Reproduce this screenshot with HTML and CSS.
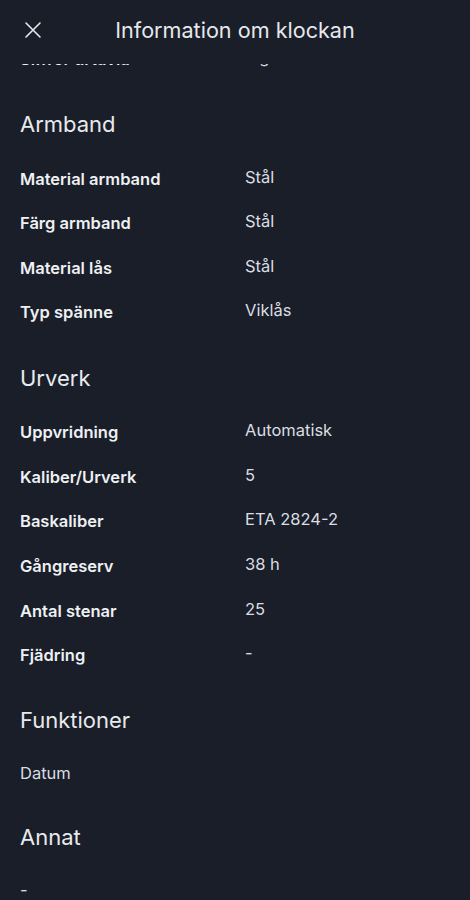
FILE: index.html
```html
<!DOCTYPE html>
<html lang="sv">
<head>
    <meta charset="UTF-8">
    <meta name="viewport" content="width=device-width, initial-scale=1.0">
    <title>Information om klockan</title>
    <link rel="stylesheet" href="styles.css">
</head>
<body>
    <div class="header">
        <button class="close" aria-label="Stäng">
            <svg width="18" height="18" viewBox="0 0 18 18">
                <path d="M2 2 L16 16 M16 2 L2 16" stroke="#e6e8ec" stroke-width="1.6" stroke-linecap="round" fill="none"/>
            </svg>
        </button>
        <span class="title">Information om klockan</span>
    </div>
    <div class="content">
        <div class="row cut">
            <span class="label">Siffror urtavla</span>
            <span class="value">Ingen</span>
        </div>

        <h2>Armband</h2>
        <div class="row"><span class="label">Material armband</span><span class="value">Stål</span></div>
        <div class="row"><span class="label">Färg armband</span><span class="value">Stål</span></div>
        <div class="row"><span class="label">Material lås</span><span class="value">Stål</span></div>
        <div class="row"><span class="label">Typ spänne</span><span class="value">Viklås</span></div>

        <h2>Urverk</h2>
        <div class="row"><span class="label">Uppvridning</span><span class="value">Automatisk</span></div>
        <div class="row"><span class="label">Kaliber/Urverk</span><span class="value">5</span></div>
        <div class="row"><span class="label">Baskaliber</span><span class="value">ETA 2824-2</span></div>
        <div class="row"><span class="label">Gångreserv</span><span class="value">38 h</span></div>
        <div class="row"><span class="label">Antal stenar</span><span class="value">25</span></div>
        <div class="row"><span class="label">Fjädring</span><span class="value">-</span></div>

        <h2>Funktioner</h2>
        <div class="row plain">Datum</div>

        <h2 class="tight">Annat</h2>
        <div class="row plain">-</div>
    </div>
</body>
</html>
```

FILE: styles.css
```css
body {
    font-family: Inter, "Noto Sans", sans-serif;
    background-color: #191e28;
    color: #e8eaee;
    margin: 0;
    width: 470px;
    height: 900px;
    overflow: hidden;
}
.header {
    position: relative;
    z-index: 2;
    height: 64px;
    background: #191e28;
    display: flex;
    align-items: center;
    justify-content: center;
    padding-bottom: 4px;
    box-sizing: border-box;
}
.close {
    position: absolute;
    left: 23px;
    top: 20px;
    background: none;
    border: none;
    padding: 0;
    width: 20px;
    height: 20px;
    display: flex;
    align-items: center;
    justify-content: center;
}
.title {
    font-size: 21.6px;
    font-weight: 400;
    color: #e6e8ec;
}
.content {
    padding: 0 20px;
}
.row {
    display: flex;
    align-items: center;
    height: 44.6px;
    font-size: 16.5px;
}
.row.cut {
    margin-top: -27.5px;
}
.label {
    width: 225px;
    font-weight: 600;
    color: #eef0f3;
}
.value {
    color: #dadde2;
    padding-bottom: 4px;
}
.plain {
    color: #dadde2;
    height: 43.6px;
    padding-bottom: 2px;
    box-sizing: border-box;
}
h2 {
    margin: 0;
    padding: 27px 0 16.2px;
    font-size: 22px;
    line-height: 32px;
    font-weight: 400;
    color: #e8eaee;
}
h2.tight {
    padding-top: 25px;
}
```
